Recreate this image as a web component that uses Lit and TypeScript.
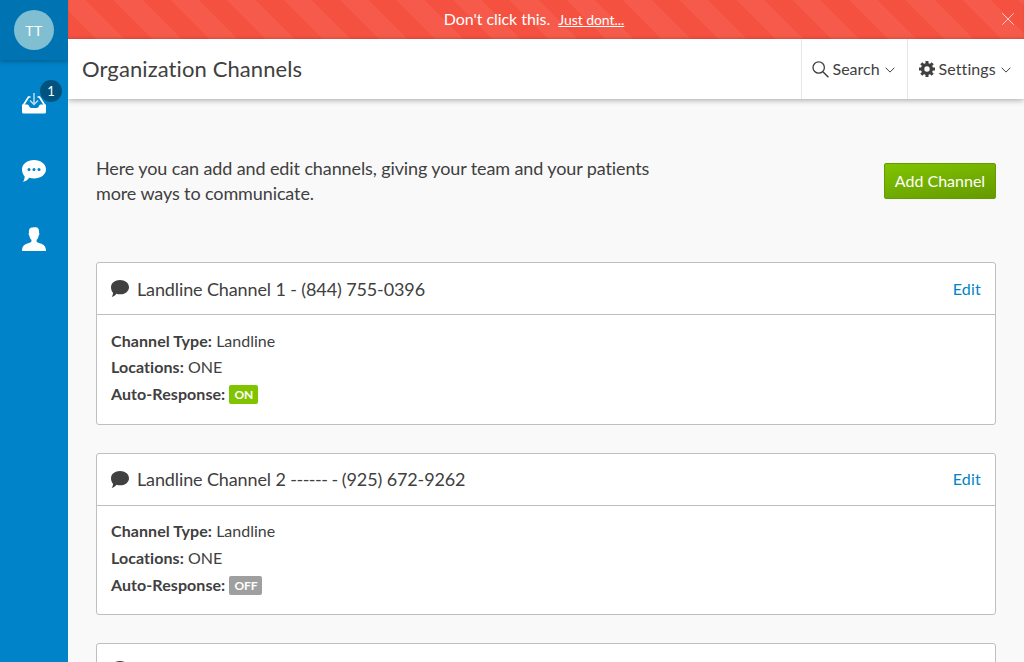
import { LitElement, html, css, svg, nothing } from 'lit';
import { customElement } from 'lit/decorators.js';

interface Channel {
  name: string;
  dashes?: string;
  phone: string;
  type?: string;
  locations?: string;
  auto?: boolean;
}

const channels: Channel[] = [
  { name: 'Landline Channel 1 - ', phone: '(844) 755-0396', type: 'Landline', locations: 'ONE', auto: true },
  { name: 'Landline Channel 2 ', dashes: '------ - ', phone: '(925) 672-9262', type: 'Landline', locations: 'ONE', auto: false },
  { name: '', phone: '' },
];

const chevron = html`<svg class="chevron" width="10" height="6" viewBox="0 0 10 6">
  <path d="M.6 .7 5 5.1 9.4 .7" fill="none" stroke="#404040" stroke-width="1" />
</svg>`;

const bubblePath = svg`<path d="M12 0C18.600 0 24 4 24 9.300s-5.400 9.300-12 9.300c-1.700 0-3.300-.25-4.800-.75C5.700 20 3.500 21.500 1 22c1-1.500 1.600-3.200 1.700-5.500C1 14.700 0 12.200 0 9.300 0 4 5.400 0 12 0Z" />`;

@customElement('app-root')
export class AppRoot extends LitElement {
  static styles = css`
    :host {
      display: flex;
      height: 662px;
      overflow: hidden;
      background: #f9f9f9;
      color: #404040;
      font: 16px/26.67px Lato, sans-serif;
      font-variant-ligatures: none;
    }
    * { box-sizing: border-box; }
    svg { display: block; flex: none; }
    .sidebar {
      width: 68px;
      flex: none;
      background: #0083c8;
      display: flex;
      flex-direction: column;
      color: #fff;
    }
    .user {
      height: 60px;
      background: #0074b2;
      box-shadow: 0 1px 5px rgba(0, 0, 0, 0.35);
      display: grid;
      place-items: center;
      clip-path: inset(0 0 -12px 0);
    }
    .avatar {
      width: 40px;
      height: 40px;
      border-radius: 50%;
      background: #80bfd2;
      display: grid;
      place-items: center;
      font-size: 14px;
      line-height: 20px;
      padding-top: 2px;
      letter-spacing: 0.4px;
    }
    .nav {
      display: flex;
      flex-direction: column;
      align-items: center;
      padding-top: 9px;
    }
    .item {
      position: relative;
      width: 68px;
      height: 68px;
      display: grid;
      place-items: center;
    }
    .count {
      position: absolute;
      left: 40px;
      top: 11px;
      width: 22px;
      height: 22px;
      border-radius: 50%;
      background: #00537f;
      font-size: 13px;
      line-height: 23px;
      text-align: center;
    }
    .main {
      flex: 1;
      min-width: 0;
      display: flex;
      flex-direction: column;
    }
    .banner {
      height: 39px;
      flex: none;
      display: flex;
      align-items: center;
      color: #fff;
      background: repeating-linear-gradient(45deg, #f45141 0, #f45141 20px, #f55a4a 20px, #f55a4a 40px);
      box-shadow: inset 0 -2px 3px -1px rgba(0, 0, 0, 0.15);
    }
    .message {
      flex: 1;
      text-align: center;
      line-height: 38px;
      letter-spacing: -0.05px;
    }
    .message a { font-size: 14px; margin-left: 4px; color: inherit; }
    .close { margin: 0 10px 1px 2px; opacity: 0.7; }
    .header {
      height: 60px;
      flex: none;
      display: flex;
      background: #fff;
      box-shadow: 0 1px 6px rgba(0, 0, 0, 0.35);
      clip-path: inset(0 0 -12px 0);
    }
    .title {
      flex: 1;
      margin: 0;
      padding-left: 14px;
      font-size: 22px;
      font-weight: 400;
      line-height: 60px;
      letter-spacing: 0.1px;
    }
    .tool {
      display: flex;
      align-items: center;
      border-left: 1px solid #e6e6e6;
      line-height: 60px;
    }
    .search { width: 106px; padding-left: 10px; }
    .settings { width: 117px; padding-left: 11px; letter-spacing: 0.1px; }
    .tool span { margin-left: 3.500px; }
    .chevron { margin: 2px 0 0 5px; }
    .content { padding: 57px 28px 0; }
    .intro {
      display: flex;
      justify-content: space-between;
      align-items: flex-start;
      height: 106px;
    }
    .intro p {
      margin: 0;
      width: 590px;
      font-size: 18px;
      line-height: 25px;
      letter-spacing: -0.11px;
    }
    .add {
      width: 112px;
      height: 36px;
      margin-top: 7px;
      border: 1px solid #659a00;
      border-radius: 2px;
      background: linear-gradient(170deg, #80c400, #659a00);
      color: #fff;
      font: 16px/34px Lato, sans-serif;
      padding: 0;
    }
    .card {
      background: #fff;
      border: 1px solid #bfbfbf;
      border-radius: 3px;
      height: 162.670px;
      margin-bottom: 28px;
    }
    .card-head {
      height: 52px;
      border-bottom: 1px solid #bfbfbf;
      display: flex;
      align-items: center;
      padding: 0 14px;
    }
    .card-head h2 {
      flex: 1;
      margin: 0 0 0 8px;
      font-size: 18px;
      font-weight: 400;
      line-height: 52px;
      letter-spacing: -0.12px;
    }
    .dashes { letter-spacing: -0.5px; }
    .edit { color: #0083c8; letter-spacing: 0.2px; line-height: 52px; }
    .card-body { padding: 12.600px 14px; }
    .card-body b { letter-spacing: 0.07px; }
    .tag {
      display: inline-block;
      height: 19px;
      padding: 0 5px;
      border-radius: 2px;
      background: #9f9f9f;
      color: #fff;
      font-size: 12px;
      font-weight: 700;
      line-height: 19px;
      letter-spacing: -0.1px;
      vertical-align: 1px;
      margin: -1px 0;
    }
    .on { background: #80c400; }
  `;

  private card(c: Channel) {
    return html`<section class="card">
      <div class="card-head">
        <svg width="18" height="17" viewBox="0 0 24 22" preserveAspectRatio="none" fill="#404040">${bubblePath}</svg>
        <h2>${c.name}${c.dashes ? html`<span class="dashes">${c.dashes}</span>` : nothing}${c.phone}</h2>
        ${c.name ? html`<a class="edit">Edit</a>` : nothing}
      </div>
      ${c.type
        ? html`<div class="card-body">
            <div><b>Channel Type:</b> ${c.type}</div>
            <div><b>Locations:</b> ${c.locations}</div>
            <div><b>Auto-Response:</b> <span class="tag ${c.auto ? 'on' : ''}">${c.auto ? 'ON' : 'OFF'}</span></div>
          </div>`
        : nothing}
    </section>`;
  }

  render() {
    return html`
      <aside class="sidebar">
        <div class="user"><div class="avatar">TT</div></div>
        <nav class="nav">
          <div class="item">
            <svg width="24" height="22" viewBox="0 0 24 22" fill="none">
              <path d="M8.500 5H6.500L1.500 13M15.500 5h2L22.500 13" stroke="#fff" stroke-width="1.700" />
              <path d="M0 12.500h5.500c1.500 0 1.500 3.500 4 3.500h5c2.500 0 2.500-3.500 4-3.500H24V20a1.500 1.500 0 0 1-1.500 1.500h-21A1.500 1.500 0 0 1 0 20Z" fill="#fff" />
              <path d="M12 1v11M8 8.500l4 4 4-4" stroke="#b9ddf0" stroke-width="1.500" />
            </svg>
            <span class="count">1</span>
          </div>
          <div class="item">
            <svg width="24" height="22" viewBox="0 0 24 22" fill="#fff">
              ${bubblePath}
              <g fill="#0083c8"><circle cx="7" cy="9.500" r="1.500" /><circle cx="12" cy="9.500" r="1.500" /><circle cx="17" cy="9.500" r="1.500" /></g>
            </svg>
          </div>
          <div class="item">
            <svg width="24" height="24" viewBox="0 0 24 24" fill="#fff">
              <path d="M0 24c0-5 2.500-7 7-8 2-.5 2.500-1 2.500-3C8 11.500 7.500 9.800 7.300 8.400 6.500 8 6.500 6 7 5.800 6.700 3.500 7 1.500 8.500.9 10 .2 11 .4 13 .2c2-.3 4.500.5 4 5.600.5.200.5 2.200-.3 2.600-.2 1.400-.7 3.100-2.200 4.600 0 2 .5 2.500 2.500 3 4.500 1 7 3 7 8Z" />
            </svg>
          </div>
        </nav>
      </aside>
      <main class="main">
        <div class="banner">
          <div class="message">Don't click this. <a><u>Just dont...</u></a></div>
          <svg class="close" width="12" height="12" viewBox="0 0 12 12"><path d="M.3.300l11.400 11.400M11.700.300.3 11.700" stroke="#fff" /></svg>
        </div>
        <header class="header">
          <h1 class="title">Organization Channels</h1>
          <div class="tool search">
            <svg width="17" height="17" viewBox="0 0 17 17" fill="none" stroke="#404040">
              <circle cx="6.700" cy="6.500" r="5.700" stroke-width="1.300" /><path d="m10.900 10.700 5.500 5.500" stroke-width="1.500" />
            </svg>
            <span>Search</span>${chevron}
          </div>
          <div class="tool settings">
            <svg width="16" height="16" viewBox="0 0 16 16" fill="none" stroke="#404040">
              <circle cx="8" cy="8" r="4.400" stroke-width="3.400" />
              <path d="M8 0v3M8 13v3M0 8h3M13 8h3M2.300 2.300l2.200 2.200M11.500 11.500l2.200 2.200M2.300 13.700l2.200-2.200M11.500 4.500l2.200-2.200" stroke-width="3" />
            </svg>
            <span>Settings</span>${chevron}
          </div>
        </header>
        <div class="content">
          <div class="intro">
            <p>Here you can add and edit channels, giving your team and your patients more ways to communicate.</p>
            <button class="add">Add Channel</button>
          </div>
          ${channels.map((c) => this.card(c))}
        </div>
      </main>
    `;
  }
}
